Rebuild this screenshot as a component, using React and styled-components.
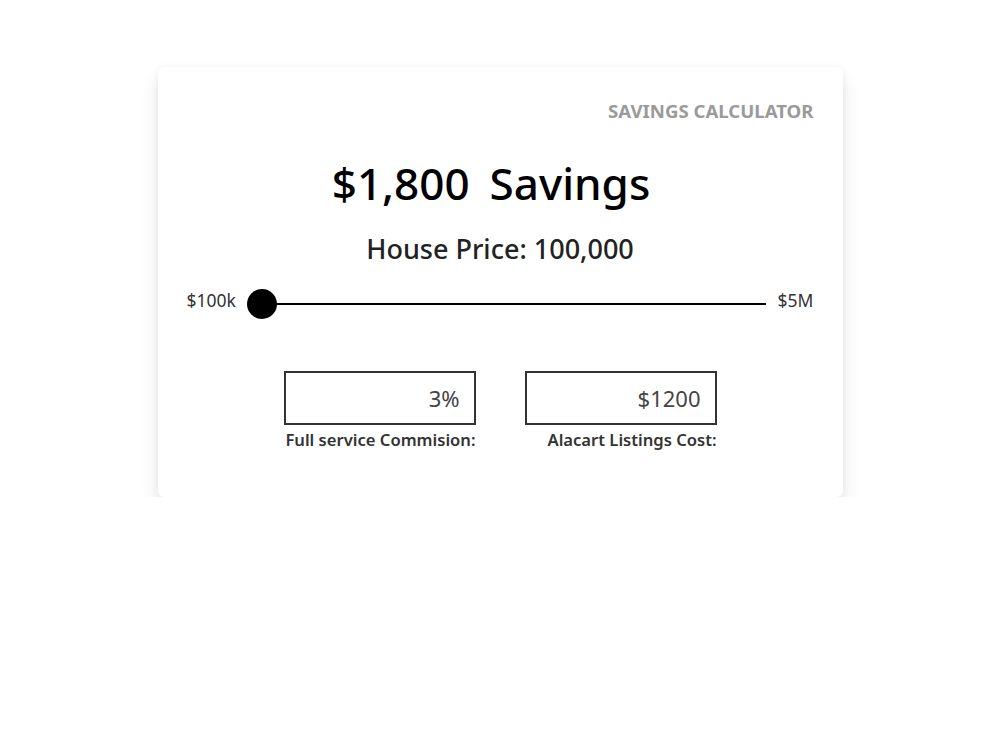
import React, { useState } from "react";
import styled, { createGlobalStyle } from "styled-components";

const GlobalStyle = createGlobalStyle`
  body {
    margin: 0;
    background: #ffffff;
    font-family: "Noto Sans", "Open Sans", sans-serif;
  }
`;

const Card = styled.section`
  width: 685px;
  height: 430px;
  box-sizing: border-box;
  margin: 67px auto 0;
  padding: 31px 29px 0;
  background: #fff;
  border-radius: 6px;
  box-shadow: 0 10px 18px rgba(0, 0, 0, 0.11), 0 0 6px rgba(0, 0, 0, 0.04);
  display: flex;
  flex-direction: column;
`;

const Title = styled.div`
  align-self: flex-end;
  font-size: 18.6px;
  font-weight: 700;
  color: #9a9a9a;
`;

const Headline = styled.h1`
  margin: 38px 0 0;
  display: flex;
  justify-content: center;
  gap: 20px;
  font-size: 44px;
  font-weight: 500;
  color: #000;
  line-height: 1;
  padding-right: 18px;
`;

const Price = styled.h2`
  margin: 25px 0 0;
  text-align: center;
  font-size: 27px;
  font-weight: 500;
  color: #222;
`;

const SliderRow = styled.div`
  margin-top: 21px;
  display: flex;
  align-items: center;
  gap: 10px;
  font-size: 17.5px;
  color: #333;
`;

const Track = styled.div`
  position: relative;
  flex: 1;
  height: 2px;
  background: #000;
  margin: 8px 2px 0 16px;
`;

const Thumb = styled.div`
  position: absolute;
  top: 50%;
  left: ${(p) => p.$pos}%;
  width: 30px;
  height: 30px;
  border-radius: 50%;
  background: #000;
  transform: translate(-50%, -50%);
`;

const Fields = styled.div`
  margin-top: 59px;
  display: flex;
  justify-content: center;
  gap: 49px;
`;

const Field = styled.label`
  display: flex;
  flex-direction: column;
  align-items: flex-end;
`;

const Box = styled.input`
  width: 192px;
  height: 54px;
  box-sizing: border-box;
  border: 2px solid #333;
  padding: 0 14px;
  text-align: right;
  font-family: inherit;
  font-size: 22px;
  color: #444;
  outline: none;
`;

const Caption = styled.span`
  margin-top: 3px;
  font-size: 16.6px;
  font-weight: 600;
  color: #333;
`;

export default function App() {
  const [price] = useState(100000);
  const [commission, setCommission] = useState("3%");
  const [listing, setListing] = useState("$1200");
  const min = 100000;
  const max = 5000000;
  const pos = ((price - min) / (max - min)) * 100;

  return (
    <>
      <GlobalStyle />
      <Card>
        <Title>SAVINGS CALCULATOR</Title>
        <Headline>
          <span>$1,800</span>
          <span>Savings</span>
        </Headline>
        <Price>House Price: {price.toLocaleString("en-US")}</Price>
        <SliderRow>
          <span>$100k</span>
          <Track>
            <Thumb $pos={pos} />
          </Track>
          <span>$5M</span>
        </SliderRow>
        <Fields>
          <Field>
            <Box value={commission} onChange={(e) => setCommission(e.target.value)} />
            <Caption>Full service Commision:</Caption>
          </Field>
          <Field>
            <Box value={listing} onChange={(e) => setListing(e.target.value)} />
            <Caption>Alacart Listings Cost:</Caption>
          </Field>
        </Fields>
      </Card>
    </>
  );
}
